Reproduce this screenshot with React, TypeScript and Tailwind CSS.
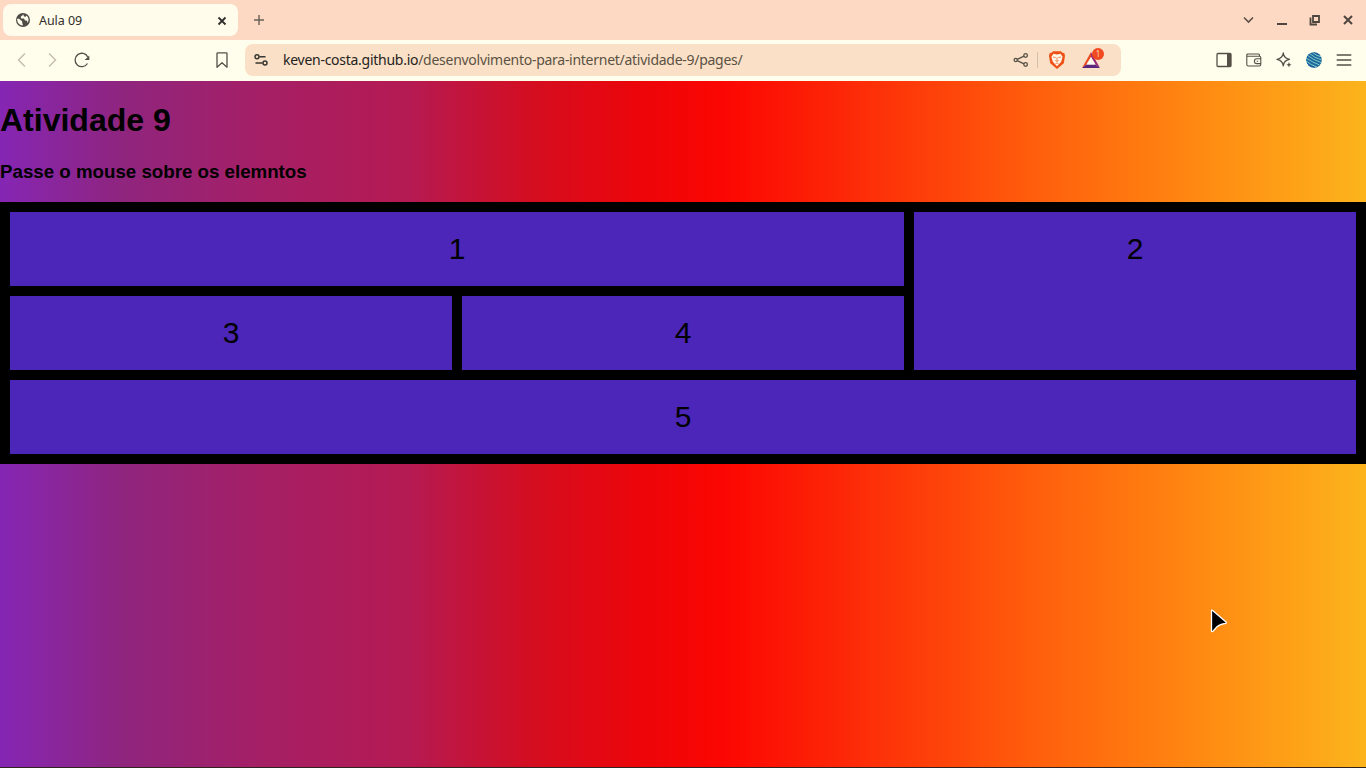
import React from "react";

const stroke = { fill: "none", stroke: "#555047", strokeWidth: 1.3 } as const;

function TabStrip() {
  return (
    <header className="flex h-10 shrink-0 items-start bg-[#fdd9c4]">
      <div className="ml-[3px] mt-1 flex h-8 w-[235px] items-center rounded-lg bg-[#fffcec] pl-[13px] pr-2.5">
        <svg className="size-[14px]" viewBox="0 0 14 14">
          <circle cx="7" cy="7" r="7" fill="#4d4b45" />
          <path d="M1.3 5.8 L3.2 5.8 L5 7.5 L6 8 L6.4 10.6 L7 12.6 A5.7 5.7 0 0 1 1.3 5.8Z M7.2 1.2 Q6.2 3 4.8 3.6 L5 5.5 L8 5.5 L9 7.5 L11.2 7.8 L11.4 10 A5.6 5.6 0 0 0 10.6 2.4 L9.7 3.8 L8 3.6Z" fill="#fffcec" />
        </svg>
        <span className="ml-[9px] mt-px text-[12.5px] leading-4 tracking-[-0.05px] text-[#302e2a]">Aula 09</span>
        <svg className="ml-auto mt-0.5 size-3" viewBox="0 0 12 12"><path d="M2.5 2.5l7 7m0-7l-7 7" fill="none" stroke="#302e2a" strokeWidth="1.8" /></svg>
      </div>
      <svg className="ml-[15px] mt-[14px] size-3" viewBox="0 0 12 12"><path d="M6 1v10M1 6h10" fill="none" stroke="#6a6058" strokeWidth="1.4" /></svg>
      <div className="ml-auto mr-[10px] mt-3 flex gap-[17px]">
        <svg className="size-4" viewBox="0 0 16 16"><path d="M3 5.5L7.5 10 12 5.5" fill="none" stroke="#5a5048" strokeWidth="1.6" /></svg>
        <svg className="size-4" viewBox="0 0 16 16"><path d="M3 12h10" stroke="#4d463f" strokeWidth="2" /></svg>
        <svg className="size-4" viewBox="0 0 16 16"><path d="M6 4h6v6H6zM3.5 5.5v7H10" fill="none" stroke="#4d463f" strokeWidth="1.8" /></svg>
        <svg className="size-4" viewBox="0 0 16 16"><path d="M4 4l8 8m0-8l-8 8" fill="none" stroke="#4d463f" strokeWidth="2" /></svg>
      </div>
    </header>
  );
}

function Toolbar() {
  return (
    <div className="flex h-[41px] shrink-0 items-center bg-[#fffdec] pb-px">
      <svg className="ml-[14px] size-4" viewBox="0 0 16 16"><path d="M11 1.5L4.5 8l6.5 6.5" fill="none" stroke="#c3bcaf" strokeWidth="1.4" /></svg>
      <svg className="ml-[14px] size-4" viewBox="0 0 16 16"><path d="M5 1.5L11.5 8 5 14.5" fill="none" stroke="#c3bcaf" strokeWidth="1.4" /></svg>
      <svg className="ml-[14px] size-4" viewBox="0 0 16 16">
        <path d="M13.5 11.5A6.7 6.7 0 1 1 13.8 5" {...stroke} />
        <path d="M15.3 3.5V8h-4.6Z" fill="#555047" />
      </svg>
      <svg className="ml-[124px] size-4" viewBox="0 0 16 16"><path d="M3 1.5Q3 .8 3.7 .8h8.6q.7 0 .7.7v13.7L8 10.8l-5 4.4Z" {...stroke} strokeLinejoin="round" /></svg>
      <div className="ml-[15px] flex h-8 w-[876px] items-center rounded-lg bg-[#fae0c6] pl-2">
        <svg className="size-4" viewBox="0 0 16 16"><g fill="none" stroke="#383630" strokeWidth="1.5"><circle cx="4" cy="4.7" r="2" /><circle cx="12" cy="11" r="2" /><path d="M6.5 4.7h6M2.5 11h7" /></g></svg>
        <p className="ml-[14px] whitespace-nowrap text-[14px] leading-5 tracking-[-0.27px] text-[#5a5244]"><span className="text-[#25231e]">keven-costa.github.io</span>/desenvolvimento-para-internet/atividade-9/pages/</p>
        <div className="ml-auto flex items-center">
          <svg className="size-4" viewBox="0 0 16 16"><g {...stroke}><circle cx="2.7" cy="8" r="1.6" /><circle cx="12.6" cy="3.5" r="1.8" /><circle cx="12.6" cy="12.5" r="1.8" /><path d="M4.2 7.3L11 4.2M4.2 8.7l6.8 3.1" /></g></svg>
          <div className="ml-2 h-4 w-px bg-[#d0c0a8]" />
          <svg className="ml-[11px] h-[18px] w-4" viewBox="0 0 16 18">
            <path d="M4 .3h8l1.4 1.4 1.9.3.7 3-1.2 7.2L8 17.9 1.2 12.2 0 5l.7-3 1.9-.3Z" fill="#ee5016" />
            <path d="M4.5 2.7L8 3.5l3.5-.8 2.1 3-1.4 5L8 15.3l-4.2-4.6-1.4-5Z" fill="#fff6e8" />
            <path d="M4 6l2.7.6M12 6l-2.7.6M8 6.5v3.5M6.3 9.4L8 10.6l1.7-1.2M6.5 12.8L8 11.9l1.5.9" fill="none" stroke="#ee7848" strokeWidth=".9" />
          </svg>
          <div className="relative ml-[17px] mr-[21px] size-[18px]">
            <svg className="size-[18px]" viewBox="0 0 18 18"><path d="M9 1L0 17l4.5-3.5L9 6Z" fill="#e94b23" /><path d="M9 1l9 16-4.5-3.5L9 6Z" fill="#9b2877" /><path d="M0 17h18l-4.5-3.5h-9Z" fill="#58267f" /><path d="M9 6l4.5 7.5h-9Z" fill="#fff8ee" /></svg>
            <span className="absolute -top-[3px] left-[10px] flex size-3 items-center justify-center rounded-full bg-[#f14920] text-[8px] text-[#ffd2b5]">1</span>
          </div>
        </div>
      </div>
      <div className="ml-auto mr-[14px] flex items-center gap-[14px]">
        <svg className="size-4" viewBox="0 0 16 16"><rect x="1" y="1.5" width="14" height="13" rx="1" {...stroke} /><path d="M11 1.5h4v13h-4Z" fill="#555047" /></svg>
        <svg className="size-4" viewBox="0 0 16 16"><path d="M13.5 4.2V3q0-1-1-1H2Q.8 2 .8 3v9.5q0 1.5 1.5 1.5h11q1.5 0 1.5-1.5V5.7q0-1.5-1.5-1.5H1M15 6.8h-4.2a2.4 2.4 0 0 0 0 4.8H15M10.7 9.2h1.5" {...stroke} strokeWidth="1.1" /></svg>
        <svg className="size-4" viewBox="0 0 16 16"><path d="M7.3 1Q7.8 6.3 13.5 7.3 7.8 8.3 7.3 13.8 6.5 8.3 1 7.3 6.5 6.3 7.3 1Z" {...stroke} strokeLinejoin="round" /><path d="M13 10l.7 2 1.8.7-1.8.7L13 15.5l-.8-2.1-1.8-.7 1.8-.7Z" fill="#555047" /></svg>
        <svg className="size-4 rounded-full" viewBox="0 0 16 16"><circle cx="8" cy="8" r="8" fill="#1d659c" /><g fill="none" stroke="#8edbd0" strokeWidth=".9"><path d="M6 0q4 4 10 5M3 1q5 5 13 7M1 3q6 5 14 7.5M0 6q6 4 13.5 7M0 9q5 4 11 6" /></g></svg>
        <svg className="size-4" viewBox="0 0 16 16"><path d="M.7 3h14.6M.7 8h14.6M.7 13h14.6" {...stroke} /></svg>
      </div>
    </div>
  );
}

const cell = "bg-[#4b26b8] p-5 text-center text-[30px] leading-[34px]";

export default function App() {
  return (
    <div className="relative flex h-screen flex-col overflow-hidden font-['Noto_Sans',sans-serif]">
      <TabStrip />
      <Toolbar />
      <main className="flex-1 border-b border-[#302320] bg-[linear-gradient(to_right,#8526b4_0%,#8f257e_9%,#a32068_18%,#b51a52_30%,#d40d20_39%,#ec0509_47%,#fc0602_53%,#fd3008_64%,#ff5f0c_76%,#ff8a12_88%,#fcb41c_100%)] font-['Liberation_Sans',Arial,sans-serif] text-black">
        <h1 className="pt-[21px] text-[32px] font-bold leading-9">Atividade 9</h1>
        <h3 className="mb-[19px] mt-[23px] text-[18.72px] font-bold leading-[22px]">Passe o mouse sobre os elemntos</h3>
        <section className="grid grid-cols-3 gap-2.5 bg-black p-2.5">
          <div className={`${cell} col-span-2`}>1</div>
          <div className={`${cell} row-span-2`}>2</div>
          <div className={cell}>3</div>
          <div className={cell}>4</div>
          <div className={`${cell} col-span-3`}>5</div>
        </section>
      </main>
      <svg className="absolute left-[1210px] top-[608px] h-7 w-5" viewBox="0 0 20 28"><path d="M1.5 3q0-1.5 1.2-.5L16 14q1 1-.4 1.3-5.6.7-8.6 3.5l-4 4.4q-1.5 1-1.5-.6Z" fill="#000" stroke="#fff" strokeWidth="1.3" strokeLinejoin="round" /></svg>
    </div>
  );
}
